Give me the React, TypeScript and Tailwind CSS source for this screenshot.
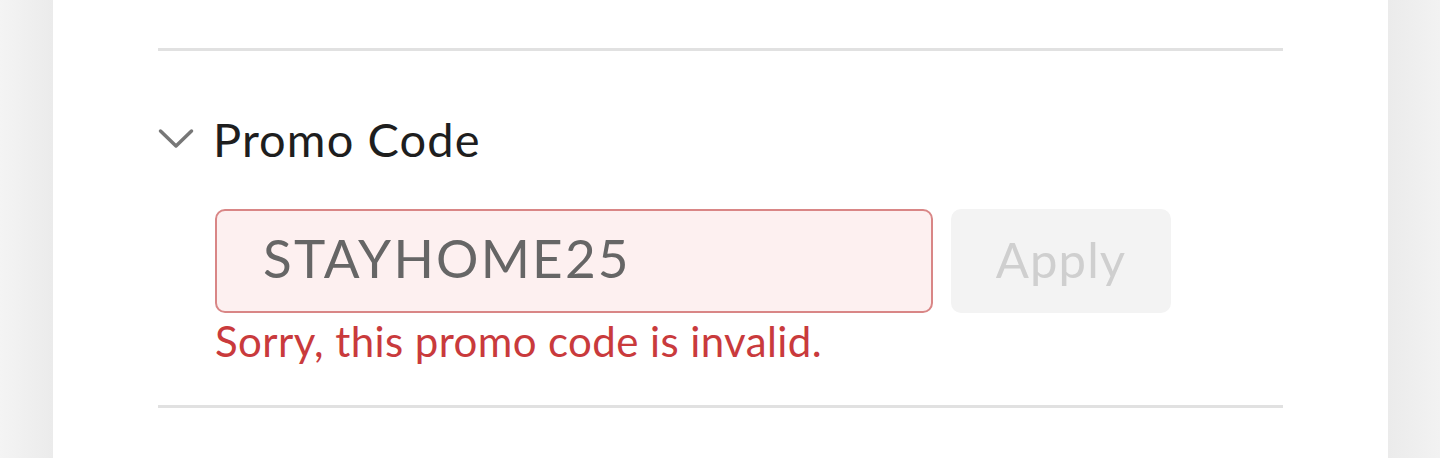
import React from "react";

function Chevron() {
  return (
    <svg width="36" height="22" viewBox="0 0 36 22" fill="none" className="shrink-0">
      <path d="M2.5 3 L18 18 L33.5 3" stroke="#777777" strokeWidth="3.5" strokeLinecap="round" strokeLinejoin="round" />
    </svg>
  );
}

export default function App() {
  return (
    <div
      className="flex h-[458px] w-full overflow-hidden bg-white"
      style={{ fontFamily: "Lato, 'Noto Sans', sans-serif" }}
    >
      <div className="w-[53px] shrink-0 bg-gradient-to-r from-[#f4f4f4] to-[#ebebeb]" />
      <div className="flex-1 bg-white px-[105px] pt-[48px]">
        <div className="h-[3px] bg-[#e1e1e1]" />
        <div className="mt-[60px] flex h-[56px] items-center">
          <Chevron />
          <span className="ml-[19px] text-[47px] leading-[56px] tracking-[1.1px] text-[#1e1e1e]">
            Promo Code
          </span>
        </div>
        <div className="ml-[57px] mt-[42px] flex gap-[18px]">
          <div className="flex h-[104px] w-[718px] items-center rounded-[10px] border-2 border-[#d98686] bg-[#fdf0f0] pb-[7px] pl-[46px] text-[53px] leading-[64px] tracking-[2.2px] text-[#666666]">
            STAYHOME25
          </div>
          <div className="flex h-[104px] w-[220px] items-center justify-center rounded-[10px] bg-[#f3f3f3] pb-[4px] text-[49px] leading-[59px] tracking-[1.1px] text-[#cfcfcf]">
            Apply
          </div>
        </div>
        <div className="ml-[57px] mt-[3px] text-[42px] leading-[50px] tracking-[0.4px] text-[#c93a3c]">
          Sorry, this promo code is invalid.
        </div>
        <div className="mt-[39px] h-[3px] bg-[#e1e1e1]" />
      </div>
      <div className="w-[52px] shrink-0 bg-gradient-to-r from-[#ebebeb] to-[#f2f2f2]" />
    </div>
  );
}
